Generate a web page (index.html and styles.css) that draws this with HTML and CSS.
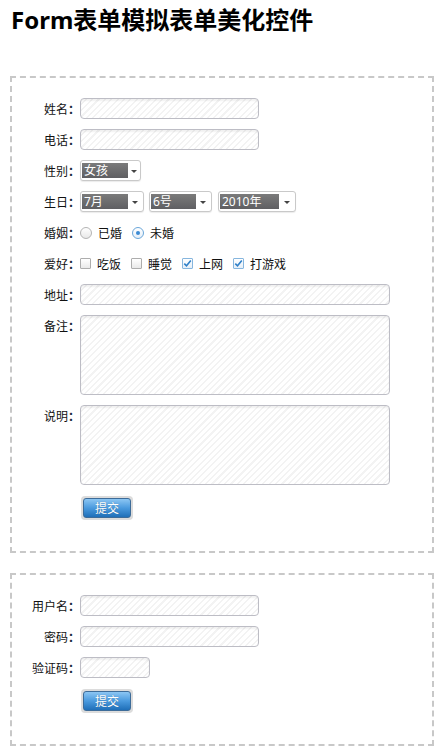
FILE: index.html
```html
<!DOCTYPE html>
<html lang="zh-CN">
<head>
<meta charset="utf-8">
<title>Form表单模拟表单美化控件</title>
<link rel="stylesheet" href="styles.css">
</head>
<body>
<h1 class="title">Form表单模拟表单美化控件</h1>

<form class="panel">
  <div class="row"><label class="lbl">姓名<span class="colon">：</span></label><input class="txt w-m" type="text"></div>
  <div class="row"><label class="lbl">电话<span class="colon">：</span></label><input class="txt w-m" type="text"></div>
  <div class="row"><label class="lbl">性别<span class="colon">：</span></label>
    <span class="sel s-61"><span class="sel-val v-46">女孩</span><span class="sel-arrow"></span></span>
  </div>
  <div class="row"><label class="lbl">生日<span class="colon">：</span></label>
    <span class="sel s-64"><span class="sel-val v-46">7月</span><span class="sel-arrow"></span></span>
    <span class="sel s-63 sp"><span class="sel-val v-45">6号</span><span class="sel-arrow"></span></span>
    <span class="sel s-78 sp2"><span class="sel-val v-59">2010年</span><span class="sel-arrow"></span></span>
  </div>
  <div class="row"><label class="lbl">婚姻<span class="colon">：</span></label>
    <span class="opt"><span class="radio"></span><span class="opt-t">已婚</span></span>
    <span class="opt"><span class="radio on"></span><span class="opt-t">未婚</span></span>
  </div>
  <div class="row"><label class="lbl">爱好<span class="colon">：</span></label>
    <span class="opt"><span class="check"></span><span class="opt-t">吃饭</span></span>
    <span class="opt"><span class="check"></span><span class="opt-t">睡觉</span></span>
    <span class="opt"><span class="check on"><svg viewBox="0 0 11 11" width="11" height="11"><path d="M2.3 5.6 L4.5 7.8 L8.8 2.6" fill="none" stroke="#2f80c8" stroke-width="1.6"/></svg></span><span class="opt-t">上网</span></span>
    <span class="opt"><span class="check on"><svg viewBox="0 0 11 11" width="11" height="11"><path d="M2.3 5.6 L4.5 7.8 L8.8 2.6" fill="none" stroke="#2f80c8" stroke-width="1.6"/></svg></span><span class="opt-t">打游戏</span></span>
  </div>
  <div class="row"><label class="lbl">地址<span class="colon">：</span></label><input class="txt w-l" type="text"></div>
  <div class="row top"><label class="lbl">备注<span class="colon">：</span></label><textarea class="txt area"></textarea></div>
  <div class="row top"><label class="lbl">说明<span class="colon">：</span></label><textarea class="txt area"></textarea></div>
  <div class="row btn-row"><span class="btn-ring"><button class="btn" type="button">提交</button></span></div>
</form>

<form class="panel">
  <div class="row"><label class="lbl">用户名<span class="colon">：</span></label><input class="txt w-m" type="text"></div>
  <div class="row"><label class="lbl">密码<span class="colon">：</span></label><input class="txt w-m" type="password"></div>
  <div class="row"><label class="lbl">验证码<span class="colon">：</span></label><input class="txt w-s" type="text"></div>
  <div class="row btn-row"><span class="btn-ring"><button class="btn" type="button">提交</button></span></div>
</form>
</body>
</html>
```

FILE: styles.css
```css
html, body {
  margin: 0;
  padding: 0;
  background: #fff;
}
body {
  font-family: "Noto Sans", "Noto Sans CJK SC", sans-serif;
  font-size: 12px;
  color: #111;
}
.title {
  margin: 0;
  padding: 3px 0 0 11px;
  height: 51px;
  font-size: 24px;
  line-height: 34px;
  font-weight: bold;
  color: #000;
  font-family: "Noto Sans", "Noto Sans CJK SC", sans-serif;
}
.panel {
  margin: 22px 12px 20px 10px;
  border: 2px dashed #c8c8c8;
  padding: 20px 0 31px 0;
}
.panel + .panel {
  margin-top: 0;
}
.row {
  display: flex;
  align-items: center;
  height: 21px;
  margin-bottom: 10px;
}
.row.top {
  align-items: flex-start;
  height: auto;
}
.lbl {
  width: 68px;
  flex: none;
  text-align: right;
  font-size: 12px;
  line-height: 21px;
  color: #111;
  font-family: "Noto Sans CJK SC", sans-serif;
}
.colon {
  font-family: "Noto Sans CJK JP", sans-serif;
  font-weight: bold;
  color: #1a2a3a;
}
.txt {
  box-sizing: border-box;
  height: 21px;
  margin: 0;
  padding: 0 4px;
  border: 1px solid #bdbdc5;
  border-radius: 4px;
  background-color: #fff;
  background-image: repeating-linear-gradient(135deg, #fff 0 3px, #f3f3f3 3px 4.5px);
  box-shadow: inset 0 2px 2px rgba(0, 0, 0, 0.06);
  font: 12px "Noto Sans", "Noto Sans CJK SC", sans-serif;
  outline: none;
}
.w-m { width: 179px; }
.w-l { width: 310px; }
.w-s { width: 70px; }
.area {
  width: 310px;
  height: 80px;
  resize: none;
  display: block;
}

.sel {
  box-sizing: border-box;
  display: inline-flex;
  height: 21px;
  padding: 2px 1px;
  border: 1px solid #c9c9c9;
  border-radius: 3px;
  background: #fff;
  box-shadow: 0 1px 1px rgba(0, 0, 0, 0.08);
}
.s-61 { width: 61px; }
.s-64 { width: 64px; }
.s-63 { width: 63px; }
.s-78 { width: 78px; }
.sel.sp { margin-left: 5px; }
.sel.sp2 { margin-left: 6px; }
.sel-val {
  box-sizing: border-box;
  display: block;
  flex: none;
  height: 15px;
  padding-left: 2px;
  background: linear-gradient(#7b7b7b, #5f5f62);
  color: #fff;
  font-size: 12px;
  line-height: 15px;
  font-family: "Noto Sans", "Noto Sans CJK SC", sans-serif;
  white-space: nowrap;
}
.v-46 { width: 46px; }
.v-45 { width: 45px; }
.v-59 { width: 59px; }
.sel-arrow {
  display: flex;
  align-items: center;
  justify-content: center;
  flex: 1;
}
.sel-arrow::after {
  content: "";
  width: 0;
  height: 0;
  border-left: 3px solid transparent;
  border-right: 3px solid transparent;
  border-top: 3px solid #444;
  margin-top: 1px;
}

.opt {
  display: inline-flex;
  align-items: center;
  margin-right: 10px;
}
.opt-t {
  margin-left: 6px;
  font-size: 12px;
  line-height: 21px;
  font-family: "Noto Sans CJK SC", sans-serif;
}
.radio {
  box-sizing: border-box;
  width: 12px;
  height: 12px;
  border: 1px solid #b4b4b4;
  border-radius: 50%;
  background: linear-gradient(#fff, #e8e8e8);
  display: flex;
  align-items: center;
  justify-content: center;
  margin-top: 1px;
}
.radio.on {
  border-color: #6aa6d9;
  background: linear-gradient(#fff, #e4eef8);
}
.radio.on::after {
  content: "";
  width: 4px;
  height: 4px;
  border-radius: 50%;
  background: #3a8ad3;
}
.check {
  box-sizing: border-box;
  width: 11px;
  height: 11px;
  border: 1px solid #adadad;
  border-radius: 1px;
  background: linear-gradient(#fff, #e9e9e9);
  display: flex;
  position: relative;
}
.check.on {
  border-color: #86b6de;
  background: linear-gradient(#fff, #e6eff8);
}
.check svg {
  position: absolute;
  left: -1px;
  top: -1px;
}

.btn-row {
  height: 24px;
  margin-top: 11px;
  margin-bottom: 0;
  padding-left: 69px;
}
.btn-ring {
  display: inline-block;
  padding: 2px;
  border-radius: 4px;
  background: #dcdcdc;
}
.btn {
  display: block;
  box-sizing: border-box;
  width: 48px;
  height: 20px;
  margin: 0;
  padding: 0;
  border: 1px solid #3d6c99;
  border-radius: 3px;
  background: linear-gradient(#8cc6f3, #4a9ade 50%, #1f6fb8);
  color: #fff;
  font: 12px/18px "Noto Sans CJK SC", sans-serif;
  text-shadow: 0 0 1px rgba(0, 0, 0, 0.3);
  cursor: pointer;
}
```
